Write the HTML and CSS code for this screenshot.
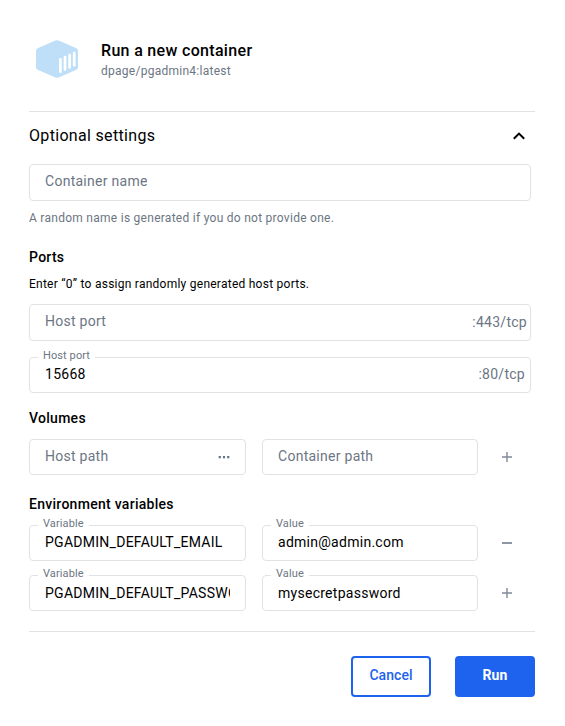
FILE: index.html
```
<!DOCTYPE html>
<html lang="en">
<head>
<meta charset="utf-8">
<title>Run a new container</title>
<link rel="stylesheet" href="styles.css">
</head>
<body>
<main class="dialog">
  <header class="head">
    <svg class="logo" width="42" height="38" viewBox="0 0 42 38">
      <path d="M19.3 .6Q21 -.1 22.7 .6L40.4 8.3Q42 9 42 10.8V27.2Q42 29 40.4 29.7L22.7 37.4Q21 38.1 19.3 37.4L1.6 29.7Q0 29 0 27.2V10.8Q0 9 1.6 8.3Z" fill="#bfdff8"/>
      <path d="M24.4 19.3V31.7M29 17.2V29.6M33.6 15.1V27.5M38.2 13.2V25.3" fill="none" stroke="#fff" stroke-width="2.7" stroke-linecap="round"/>
    </svg>
    <div>
      <h1 class="title">Run a new container</h1>
      <div class="image">dpage/pgadmin4:latest</div>
    </div>
  </header>
  <section class="settings">
    <div class="toggle">
      <span class="toggle-text">Optional settings</span>
      <svg width="12" height="8" viewBox="0 0 12 8"><path d="M.8 6.8L6 1.6L11.2 6.8" fill="none" stroke="#000" stroke-width="2"/></svg>
    </div>
    <div class="field tall"><span class="hint">Container name</span></div>
    <p class="help">A random name is generated if you do not provide one.</p>
    <h2 class="group ports">Ports</h2>
    <p class="note">Enter “0” to assign randomly generated host ports.</p>
    <div class="field tall first-port"><span class="hint">Host port</span><span class="suffix">:443/tcp</span></div>
    <div class="field second-port"><span class="label">Host port</span><span class="value">15668</span><span class="suffix inset">:80/tcp</span></div>
    <h2 class="group volumes">Volumes</h2>
    <div class="row">
      <div class="field"><span class="hint">Host path</span><svg class="dots" width="12" height="4" viewBox="0 0 12 4"><path d="M.7 1h2.2v2.2h-2.2zM4.9 1h2.2v2.2h-2.2zM9.1 1h2.2v2.2h-2.2z" fill="#677285"/></svg></div>
      <div class="field"><span class="hint">Container path</span></div>
      <svg class="action" width="10" height="10" viewBox="0 0 10 10"><path d="M0 5H10M5 0V10" stroke="#7f899b" stroke-width="1.4"/></svg>
    </div>
    <h2 class="group env">Environment variables</h2>
    <div class="row">
      <div class="field"><span class="label">Variable</span><span class="value">PGADMIN_DEFAULT_EMAIL</span></div>
      <div class="field"><span class="label">Value</span><span class="value">admin@admin.com</span></div>
      <svg class="action" width="10" height="10" viewBox="0 0 10 10"><path d="M0 5H10" stroke="#8d96a7" stroke-width="2"/></svg>
    </div>
    <div class="row next low">
      <div class="field"><span class="label">Variable</span><span class="value">PGADMIN_DEFAULT_PASSWORD</span></div>
      <div class="field"><span class="label">Value</span><span class="value">mysecretpassword</span></div>
      <svg class="action" width="10" height="10" viewBox="0 0 10 10"><path d="M0 5H10M5 0V10" stroke="#7f899b" stroke-width="1.4"/></svg>
    </div>
  </section>
  <footer class="foot">
    <button class="btn">Cancel</button>
    <button class="btn primary">Run</button>
  </footer>
</main>
</body>
</html>
```
FILE: styles.css
```
* { box-sizing: border-box; }
body { margin: 0; background: #fff; color: #000; font-family: Roboto, sans-serif; }
h1, h2, p { margin: 0; }
svg { display: block; flex: none; }
.dialog { width: 506px; margin-left: 29px; padding-top: 40px; }
.head { display: flex; height: 72px; padding-left: 7px; border-bottom: 1px solid #e1e2e6; }
.logo { margin-right: 23px; }
.title { margin-top: 1px; font-size: 16px; font-weight: 500; line-height: 20px; letter-spacing: .32px; }
.image { margin-top: 2px; font-size: 12px; line-height: 16px; letter-spacing: .26px; color: #6c7683; }
.settings { height: 520px; border-bottom: 1px solid #e1e2e6; }
.toggle { display: flex; align-items: center; justify-content: space-between; height: 47px; padding-right: 10px; margin-bottom: 5px; }
.toggle-text { font-size: 16px; letter-spacing: .32px; }
.field { position: relative; display: flex; align-items: center; width: 502px; height: 36px; padding: 0 15px; border: 1px solid #e1e2e6; border-radius: 4px; font-size: 14px; line-height: 20px; letter-spacing: .27px; }
.tall { height: 37px; }
.hint { color: #6c7683; margin-bottom: 2px; }
.tall .hint { margin-bottom: 3px; }
.value { flex: 1; overflow: hidden; white-space: nowrap; margin-bottom: 2px; }
.low .value { margin-bottom: 0; }
.label { position: absolute; top: -10px; left: 8px; padding: 0 5px; background: #fff; color: #6c7683; font-size: 11px; line-height: 16px; letter-spacing: .1px; }
.suffix { margin-left: auto; margin-right: -12px; margin-bottom: 1px; color: #6c7683; }
.inset { margin-right: -10px; margin-bottom: 2px; }
.dots { margin-left: auto; }
.help { margin-top: 9px; font-size: 12px; line-height: 16px; letter-spacing: .27px; color: #6c7683; }
.group { font-size: 14px; font-weight: 500; line-height: 20px; letter-spacing: .28px; }
.ports { margin-top: 21px; }
.note { margin-top: 9px; font-size: 12px; line-height: 16px; letter-spacing: .25px; }
.first-port { margin-top: 12px; }
.second-port { margin-top: 16px; }
.volumes { margin-top: 15px; margin-bottom: 11px; }
.env { margin-top: 19px; margin-bottom: 11px; }
.row { display: grid; grid-template-columns: 217px 216px 10px; column-gap: 16px; align-items: center; }
.row .field { width: auto; }
.action { margin-left: 8px; }
.next { margin-top: 14px; }
.foot { display: flex; justify-content: flex-end; gap: 24px; padding-top: 24px; }
.btn { width: 80px; height: 41px; padding: 0 0 4px; border: 2px solid #1d63ed; border-radius: 4px; background: #fff; color: #1d63ed; font: 500 14px/20px Roboto, sans-serif; letter-spacing: .05px; }
.primary { background: #1d63ed; color: #fff; font-weight: 700; }
```
